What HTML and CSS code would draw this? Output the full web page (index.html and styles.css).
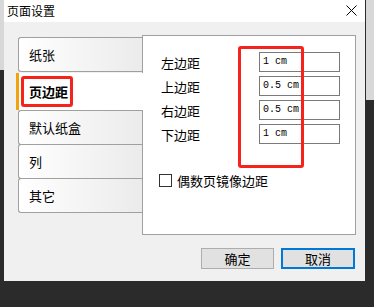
FILE: index.html
```html
<!DOCTYPE html>
<html lang="zh-CN">
<head>
    <meta charset="UTF-8">
    <meta name="viewport" content="width=device-width, initial-scale=1.0">
    <title>页面设置</title>
    <link rel="stylesheet" href="styles.css">
</head>
<body>
    <div class="dialog">
        <div class="titlebar">
            <span class="title">页面设置</span>
            <svg class="close" width="11" height="11" viewBox="0 0 11 11">
                <path d="M0.5 0.5 L10.5 10.5 M10.5 0.5 L0.5 10.5" stroke="#000" stroke-width="1" fill="none"/>
            </svg>
        </div>
        <div class="dialog-body">
            <div class="tabs-area">
                <ul class="tabs">
                    <li class="tab">纸张</li>
                    <li class="tab active"><span class="mark">页边距</span></li>
                    <li class="tab">默认纸盒</li>
                    <li class="tab">列</li>
                    <li class="tab">其它</li>
                </ul>
                <div class="panel">
                    <div class="fields">
                        <span class="label">左边距</span><span class="box">1 cm</span>
                        <span class="label">上边距</span><span class="box">0.5 cm</span>
                        <span class="label">右边距</span><span class="box">0.5 cm</span>
                        <span class="label">下边距</span><span class="box">1 cm</span>
                    </div>
                    <div class="check">
                        <span class="checkbox"></span>
                        <span>偶数页镜像边距</span>
                    </div>
                    <div class="highlight"></div>
                </div>
            </div>
            <div class="buttons">
                <button type="button" class="btn">确定</button>
                <button type="button" class="btn default">取消</button>
            </div>
        </div>
    </div>
</body>
</html>
```

FILE: styles.css
```css
* {
    box-sizing: border-box;
}

body {
    margin: 0;
    background-color: #2b2b2b;
    background-image: linear-gradient(#d8d8d8, #d8d8d8), linear-gradient(#d8d8d8, #d8d8d8);
    background-repeat: no-repeat;
    background-position: right top, left top;
    background-size: 8px 100px, 4px 70px;
    font-family: "Noto Sans CJK SC", "Noto Sans", sans-serif;
    color: #000;
}

.dialog {
    margin-left: 4px;
    width: 361px;
    height: 281px;
    background-color: #f0f0f0;
}

.titlebar {
    height: 22px;
    background-color: #fff;
    display: flex;
    align-items: center;
    padding-left: 3px;
    padding-right: 8px;
}

.title {
    font-size: 12px;
    line-height: 22px;
}

.close {
    margin-left: auto;
    margin-top: -2px;
}

.dialog-body {
    padding: 13px 9px 0 14px;
}

.tabs-area {
    display: flex;
    align-items: flex-start;
}

.tabs {
    list-style: none;
    margin: 2px 0 0 0;
    padding: 0;
    width: 124px;
}

.tab {
    height: 35px;
    display: flex;
    align-items: center;
    padding-left: 10px;
    font-size: 13px;
    border: 1px solid #a0a0a0;
    border-right: none;
    border-radius: 3px 0 0 3px;
    background: linear-gradient(to right, #ffffff, #ebebeb);
}

.tab + .tab {
    margin-top: -1px;
}

.tab.active {
    height: 37px;
    margin: 1px -1px 0 -2px;
    padding-left: 2px;
    border: none;
    border-left: 3px solid #f0a30a;
    border-radius: 0;
    background: #fff;
    position: relative;
    z-index: 1;
}

.tab.active + .tab {
    margin-top: 0;
}

.mark {
    display: inline-block;
    font-weight: bold;
    line-height: 25px;
    padding: 0 2px 0 5px;
    border: 3px solid #f5231b;
    border-radius: 3px;
}

.panel {
    position: relative;
    width: 214px;
    height: 200px;
    border: 1px solid #a0a0a0;
    background-color: #fff;
    padding: 16px 0 0 18px;
}

.fields {
    display: grid;
    grid-template-columns: 98px 81px;
    grid-auto-rows: 20px;
    row-gap: 4px;
    align-items: center;
}

.label {
    font-size: 13px;
}

.box {
    height: 20px;
    border: 1px solid #7a7a7a;
    padding-left: 3px;
    font-family: "Liberation Mono", monospace;
    font-size: 10px;
    line-height: 18px;
}

.check {
    display: flex;
    align-items: center;
    gap: 5px;
    margin: 30px 0 0 -2px;
    font-size: 13px;
    height: 13px;
}

.checkbox {
    width: 13px;
    height: 13px;
    border: 1px solid #333;
    background: #fff;
}

.highlight {
    position: absolute;
    left: 95px;
    top: 10px;
    width: 66px;
    height: 122px;
    border: 3px solid #f5231b;
    border-radius: 3px;
}

.buttons {
    display: flex;
    justify-content: flex-end;
    gap: 7px;
    margin: 13px 1px 0 0;
}

.btn {
    width: 73px;
    height: 21px;
    padding: 0;
    font-family: inherit;
    font-size: 13px;
    line-height: 19px;
    background-color: #e1e1e1;
    border: 1px solid #adadad;
    color: #000;
}

.btn.default {
    width: 74px;
    border: 2px solid #0078d7;
    line-height: 17px;
}
```
